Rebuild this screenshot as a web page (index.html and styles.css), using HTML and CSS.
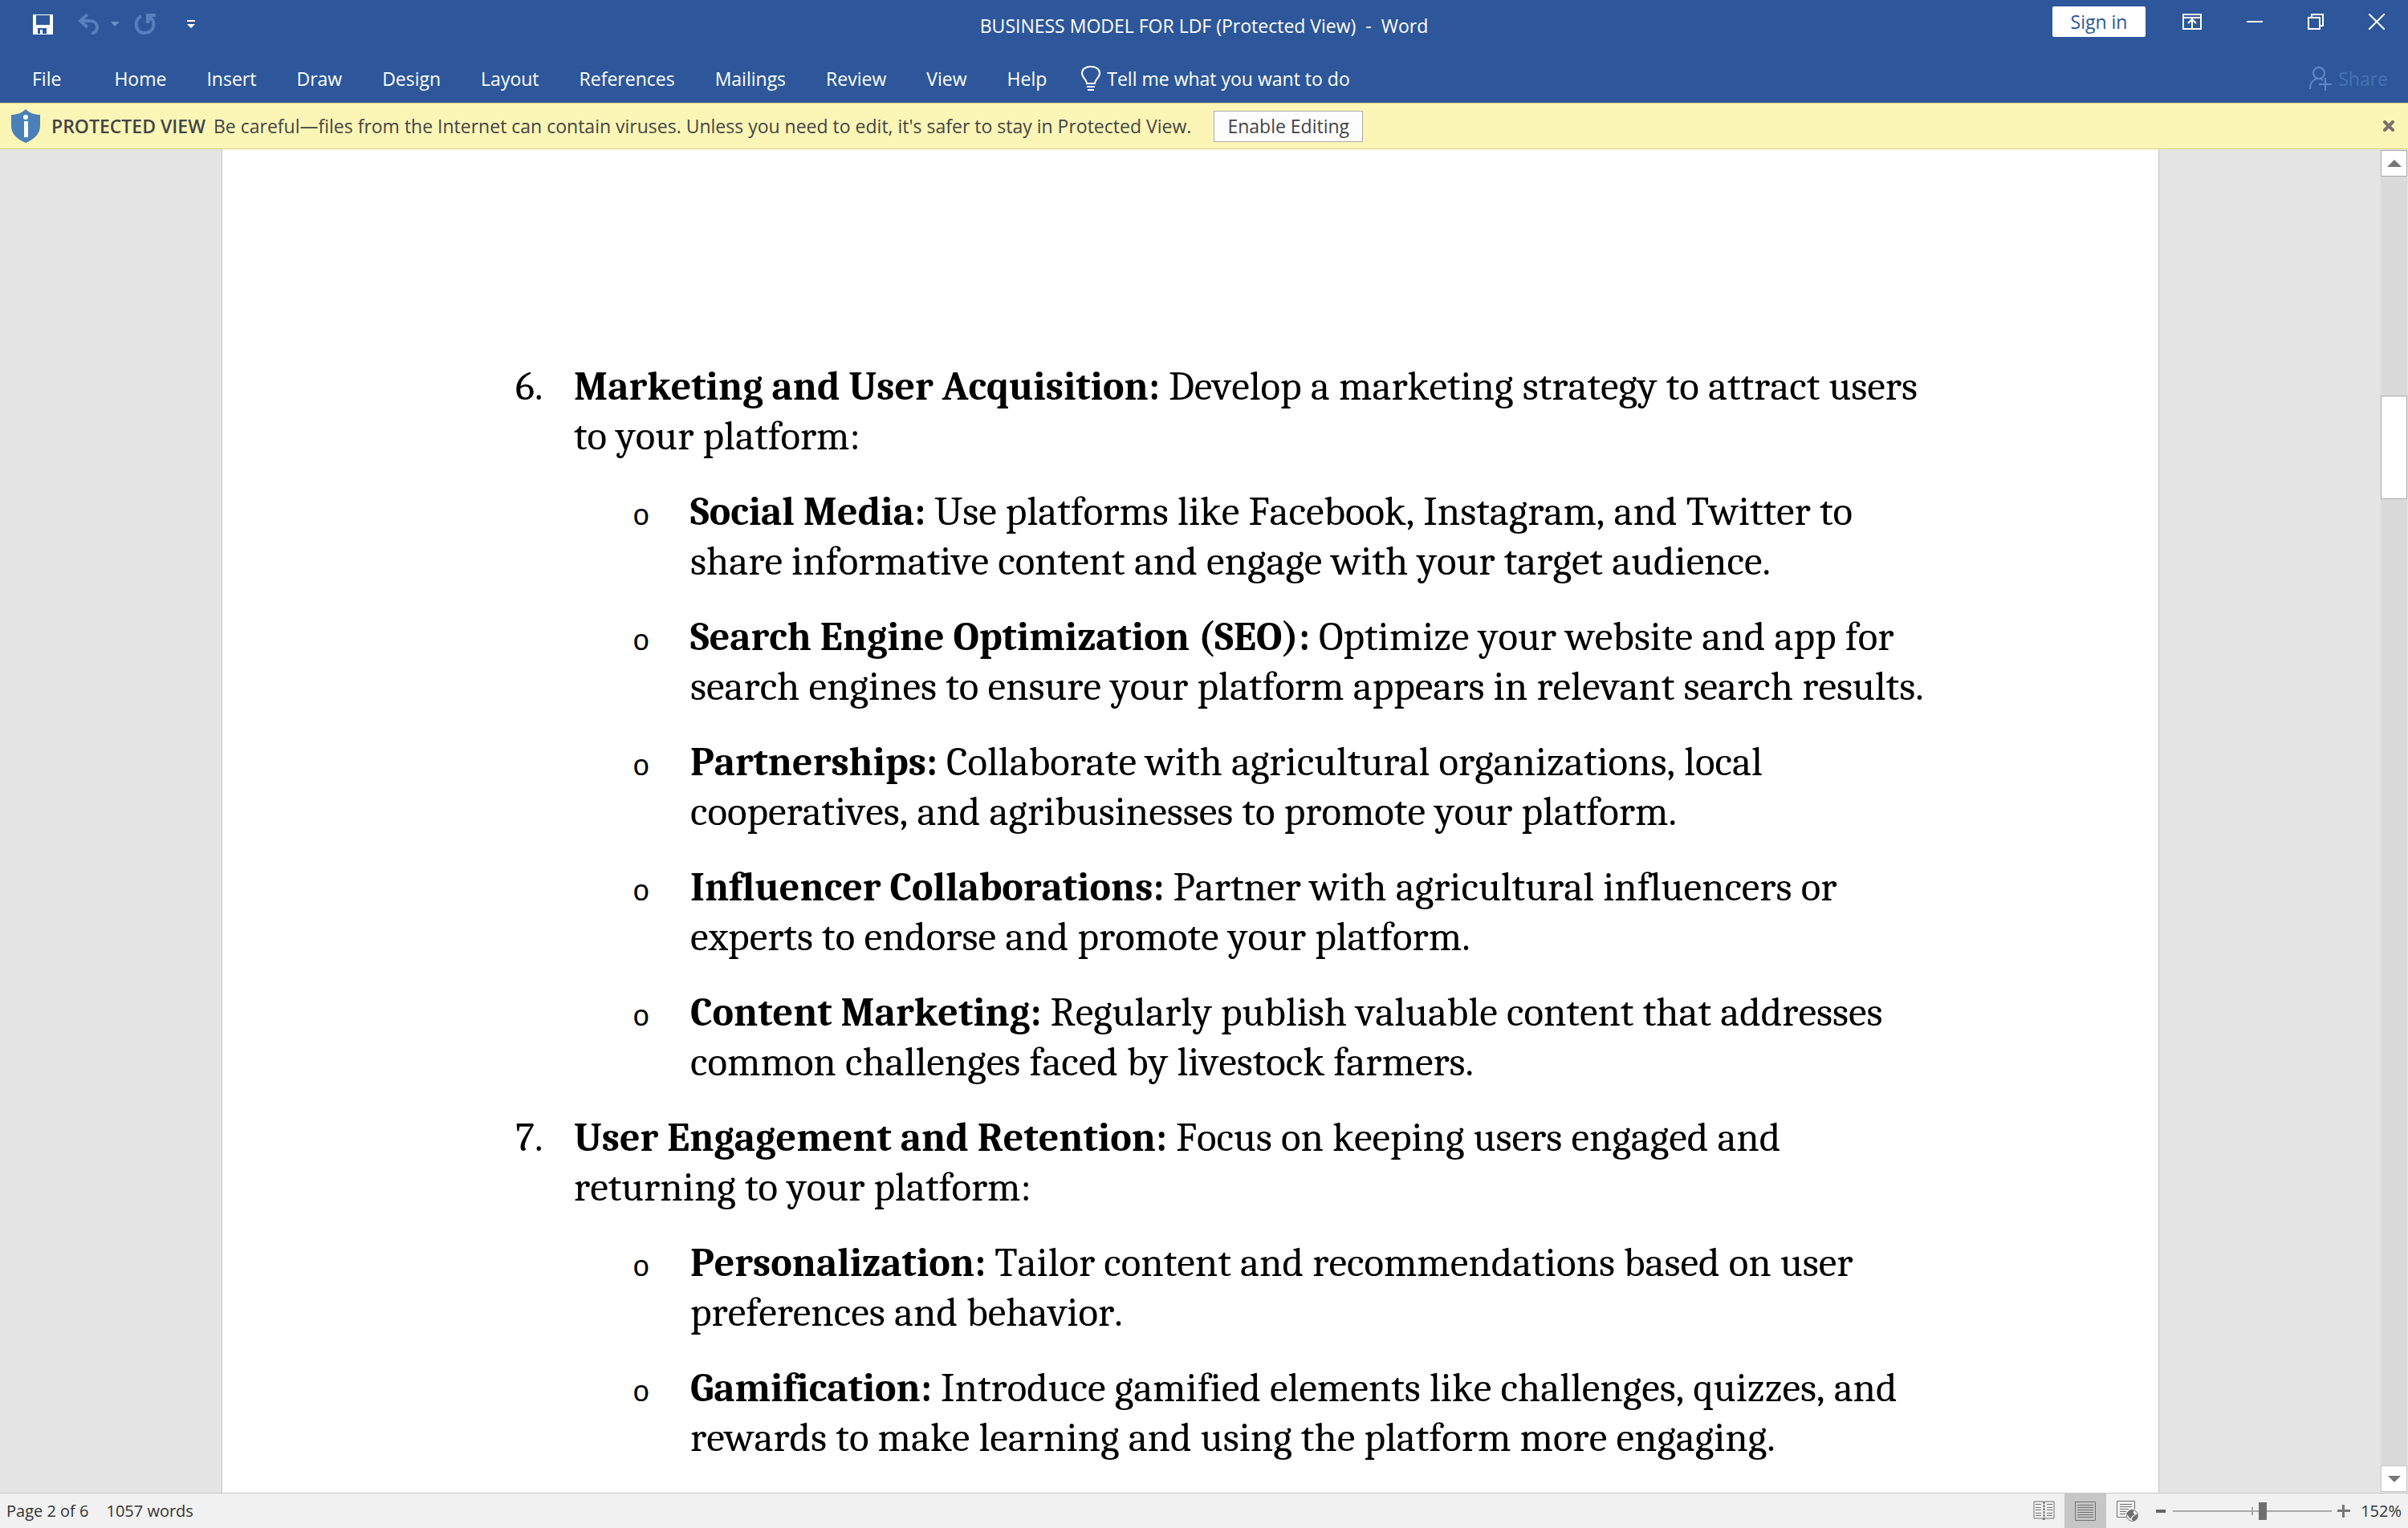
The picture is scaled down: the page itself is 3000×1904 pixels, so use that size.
FILE: index.html
```html
<!DOCTYPE html>
<html lang="en">
<head>
<meta charset="utf-8">
<meta name="viewport" content="width=device-width, initial-scale=1">
<title>BUSINESS MODEL FOR LDF (Protected View) - Word</title>
<link rel="stylesheet" href="styles.css">
</head>
<body>
<header class="app-header">
  <div class="title-bar">
    <div class="quick-access">
      <button class="icon-btn" aria-label="Save"><svg width="25" height="25" viewBox="0 0 25 25"><path fill="#fff" fill-rule="evenodd" d="M0 0h25v25H0zM4 1v12h17V1zM6 17v7h3v-5h3v5h5v-7z"/></svg></button>
      <button class="icon-btn undo" aria-label="Undo"><svg width="26" height="26" viewBox="0 0 26 26" fill="none" stroke="#557fbd" stroke-width="4"><path d="M12 1L3 9l9 8M3 9h12c11 0 12 14 2 16"/></svg></button>
      <button class="icon-btn undo-menu" aria-label="Undo list"><svg width="11" height="6" viewBox="0 0 11 6"><path fill="#6a90c9" d="M0 0h11L5 6z"/></svg></button>
      <button class="icon-btn redo" aria-label="Repeat"><svg width="28" height="28" viewBox="0 0 28 28"><path fill="none" stroke="#557fbd" stroke-width="4" d="M9 4C-1 9 1 25 13 25c13 0 15-15 6-20"/><path fill="#557fbd" d="M15 1h12v4h-5l-3 8h-4z"/></svg></button>
      <button class="icon-btn" aria-label="Customize Quick Access Toolbar"><svg width="10" height="11" viewBox="0 0 10 11" fill="#fff"><path d="M0 0h10v2H0zM0 5h10l-5 5z"/></svg></button>
    </div>
    <h1 class="doc-title">BUSINESS MODEL FOR LDF (Protected View)&nbsp; -&nbsp; Word</h1>
    <div class="window-controls">
      <button class="sign-in">Sign in</button>
      <button class="icon-btn" aria-label="Ribbon Display Options"><svg width="24" height="20" viewBox="0 0 24 20" fill="none" stroke="#fff" stroke-width="2"><path d="M1 1h22v18H1zM1 5h22M12 19V8M7 12l5-5 5 5"/></svg></button>
      <button class="icon-btn" aria-label="Minimize"><svg width="20" height="20" viewBox="0 0 20 20"><path fill="#fff" d="M0 9h20v2H0z"/></svg></button>
      <button class="icon-btn" aria-label="Restore"><svg width="20" height="20" viewBox="0 0 20 20" fill="none" stroke="#fff" stroke-width="2"><path d="M1 5h14v14H1zM5 5V1h14v14h-4"/></svg></button>
      <button class="icon-btn" aria-label="Close"><svg width="20" height="20" viewBox="0 0 20 20" fill="none" stroke="#fff" stroke-width="2"><path d="M0 0l20 20M20 0L0 20"/></svg></button>
    </div>
  </div>
  <nav class="ribbon" aria-label="Ribbon tabs">
    <button class="tab tab-file">File</button>
    <button class="tab">Home</button>
    <button class="tab">Insert</button>
    <button class="tab">Draw</button>
    <button class="tab">Design</button>
    <button class="tab">Layout</button>
    <button class="tab">References</button>
    <button class="tab">Mailings</button>
    <button class="tab">Review</button>
    <button class="tab">View</button>
    <button class="tab">Help</button>
    <button class="tab tell-me"><svg width="24" height="32" viewBox="0 0 24 32" fill="none" stroke="#fff" stroke-width="2"><path d="M7 22c0-5-6-7-6-13C1 4 6 1 12 1s11 3 11 8c0 6-6 8-6 13zM7 26h10M8 30h8"/></svg>Tell me what you want to do</button>
    <button class="tab share" disabled><svg width="28" height="30" viewBox="0 0 28 30" fill="none" stroke="#6189c8" stroke-width="2"><circle cx="12" cy="8" r="7"/><path d="M1 28c0-8 4-13 11-13 2 0 4 1 5 2M20 14v16M12 22h16"/></svg>Share</button>
  </nav>
</header>

<section class="notice" aria-label="Protected View">
  <svg class="shield" width="37" height="42" viewBox="0 0 37 42"><path fill="#4a80b8" d="M18 0c5 5 11 7 18 7v14c0 10-8 17-18 21C8 38 0 31 0 21V7c7 0 13-2 18-7z"/><circle cx="18" cy="10" r="3" fill="#fff"/><path fill="#fff" d="M16 15h5v20h-5z"/></svg>
  <strong class="notice-title">PROTECTED VIEW</strong>
  <span>Be careful—files from the Internet can contain viruses. Unless you need to edit, it's safer to stay in Protected View.</span>
  <button class="enable">Enable Editing</button>
  <button class="icon-btn notice-close" aria-label="Close message"><svg width="14" height="14" viewBox="0 0 14 14"><path stroke="#7a706c" stroke-width="4" stroke-linecap="round" d="M2 2l10 10M12 2L2 12"/></svg></button>
</section>

<div class="workspace">
  <div class="canvas">
    <main class="page">
      <ol class="sections" start="6">
        <li><strong>Marketing and User Acquisition:</strong> Develop a marketing strategy to attract users to your platform:
          <ul class="points">
            <li><strong>Social Media:</strong> Use platforms like Facebook, Instagram, and Twitter to share informative content and engage with your target audience.</li>
            <li><strong>Search Engine Optimization (SEO):</strong> Optimize your website and app for search engines to ensure your platform appears in relevant search results.</li>
            <li><strong>Partnerships:</strong> Collaborate with agricultural organizations, local cooperatives, and agribusinesses to promote your platform.</li>
            <li><strong>Influencer Collaborations:</strong> Partner with agricultural influencers or experts to endorse and promote your platform.</li>
            <li><strong>Content Marketing:</strong> Regularly publish valuable content that addresses common challenges faced by livestock farmers.</li>
          </ul>
        </li>
        <li><strong>User Engagement and Retention:</strong> Focus on keeping users engaged and returning to your platform:
          <ul class="points">
            <li><strong>Personalization:</strong> Tailor content and recommendations based on user preferences and behavior.</li>
            <li><strong>Gamification:</strong> Introduce gamified elements like challenges, quizzes, and rewards to make learning and using the platform more engaging.</li>
          </ul>
        </li>
      </ol>
    </main>
  </div>
  <div class="scrollbar">
    <button class="scroll-btn" aria-label="Scroll up"><svg width="18" height="9" viewBox="0 0 18 9"><path fill="#777" d="M0 9l9-9 9 9z"/></svg></button>
    <div class="scroll-track"><div class="scroll-thumb"></div></div>
    <button class="scroll-btn scroll-down" aria-label="Scroll down"><svg width="16" height="8" viewBox="0 0 16 8"><path fill="#777" d="M0 0h16L8 8z"/></svg></button>
  </div>
</div>

<footer class="status-bar">
  <span>Page 2 of 6</span>
  <span>1057 words</span>
  <div class="view-modes">
    <button class="view-btn" aria-label="Read Mode"><svg width="27" height="25" viewBox="0 0 27 25" fill="none" stroke="#707070"><path d="M12 1H1v21h11l1 2 2-2h11V1H15l-2 2zM3 4.500h7M3 8.500h7M3 11.500h7M3 15.500h7M3 18.500h7M17 4.500h7M17 8.500h7M17 11.500h7M17 15.500h7M17 18.500h7"/><path stroke-width="2" stroke-dasharray="3 1" d="M13.500 1v23"/></svg></button>
    <button class="view-btn active" aria-label="Print Layout"><svg width="26" height="24" viewBox="0 0 26 24" fill="none" stroke="#707070"><path d="M.5.5h25v23H.5zM3 4.500h20M3 7.500h20M3 10.500h20M3 13.500h20M3 16.500h20M3 19.500h20"/></svg></button>
    <button class="view-btn" aria-label="Web Layout"><svg width="27" height="26" viewBox="0 0 27 26" fill="none" stroke="#707070"><path d="M12 20.500H.5V.5h22v10M4 4.500h15M4 7.500h15M4 10.500h11M4 13.500h8M4 16.500h7"/><circle cx="19.500" cy="18.500" r="7" fill="#f1f1f1"/><path fill="#707070" d="M13 16c1-3 5-5 8-4l-1 3 2 2-3 2-2 3zM21 20l4-3c2 4-1 7-4 8l-2-2z"/></svg></button>
  </div>
  <div class="zoom">
    <button class="icon-btn" aria-label="Zoom out"><svg width="12" height="4" viewBox="0 0 12 4"><path fill="#666" d="M0 0h12v4H0z"/></svg></button>
    <input class="zoom-slider" type="range" min="0" max="100" value="57" aria-label="Zoom">
    <button class="icon-btn" aria-label="Zoom in"><svg width="16" height="16" viewBox="0 0 16 16"><path fill="#777" d="M6 0h3v6h7v3H9v7H6V9H0V6h6z"/></svg></button>
    <span class="zoom-value">152%</span>
  </div>
</footer>
</body>
</html>
```
FILE: styles.css
```css
* {
  box-sizing: border-box;
}

body {
  margin: 0;
  height: 100vh;
  display: flex;
  flex-direction: column;
  overflow: hidden;
  background: #e4e4e4;
  font: 23px/32px "Segoe UI", "Open Sans", "Noto Sans", sans-serif;
  color: #444;
}

button {
  margin: 0;
  padding: 0;
  border: 0;
  background: none;
  color: inherit;
  font: inherit;
  white-space: nowrap;
}

svg {
  display: block;
  flex: none;
}

.icon-btn {
  display: flex;
  align-items: center;
}

/* Title bar and ribbon tabs */
.app-header {
  background: #2d579a;
  color: #fff;
}

.title-bar {
  display: grid;
  grid-template-columns: 1fr auto 1fr;
  height: 68px;
}

.quick-access {
  display: flex;
  align-items: center;
  height: 60px;
  padding-left: 41px;
}

.undo {
  margin-left: 31px;
}

.undo-menu {
  margin-left: 15px;
}

.redo {
  margin: 0 38px 0 18px;
}

.doc-title {
  margin: 0;
  padding-top: 16px;
  font-size: 23px;
  line-height: 32px;
  font-weight: 400;
}

.window-controls {
  display: flex;
  justify-content: flex-end;
  align-items: center;
  gap: 56px;
  height: 54px;
  padding-right: 29px;
}

.sign-in {
  width: 116px;
  height: 38px;
  margin-right: -10px;
  border-radius: 2px;
  background: #fff;
  color: #2b579a;
}

.ribbon {
  display: flex;
  align-items: center;
  gap: 50px;
  height: 60px;
  padding: 0 25px 0 40px;
}

.tab-file {
  margin-right: 16px;
}

.tell-me {
  display: flex;
  align-items: center;
  gap: 8px;
  margin-left: -7px;
}

.share {
  display: flex;
  align-items: center;
  gap: 8px;
  margin-left: auto;
  color: #4674b6;
}

/* Protected view message */
.notice {
  display: flex;
  align-items: center;
  height: 58px;
  padding: 0 17px 0 14px;
  border: solid #d8d080;
  border-width: 1px 0;
  background: #fbf6b6;
}

.notice-title {
  margin: 0 10px 0 13px;
  font-weight: 600;
}

.enable {
  width: 186px;
  height: 39px;
  margin-left: 28px;
  border: 1px solid #ababab;
  background: #fdfdfd;
}

.notice-close {
  margin-left: auto;
}

/* Document */
.workspace {
  flex: 1;
  min-height: 0;
  display: flex;
}

.canvas {
  flex: 1;
  display: flex;
  padding: 0 276px;
  overflow: hidden;
}

.page {
  flex: 1;
  padding: 265px 288px 0 365px;
  border: solid #c6c6c6;
  border-width: 0 1px;
  background: #fff;
  color: #000;
  font: 51px/62px Cambria, Caladea, "Liberation Serif", serif;
  font-kerning: none;
  font-variant-ligatures: none;
}

.page strong {
  font-size: 50px;
  line-height: 1;
}

.sections,
.points {
  margin: 0;
  padding: 0;
  list-style: none;
}

.sections {
  counter-reset: section 5;
}

.sections > li {
  counter-increment: section;
  padding-left: 73px;
  margin-bottom: 32px;
  text-indent: -73px;
}

.sections > li::before {
  content: counter(section) ".";
  display: inline-block;
  width: 73px;
  line-height: 1;
  text-indent: 0;
}

.points {
  padding-left: 73px;
}

.points li {
  margin-top: 32px;
  padding-left: 72px;
  text-indent: -72px;
}

.points li::before {
  content: "o";
  display: inline-block;
  width: 72px;
  font-family: "Courier New", "Liberation Mono", monospace;
  font-size: 36px;
  line-height: 1;
  text-indent: 0;
}

/* Vertical scroll bar */
.scrollbar {
  display: flex;
  flex-direction: column;
  width: 34px;
  padding: 1px 1px 1px 0;
}

.scroll-btn {
  display: flex;
  align-items: center;
  justify-content: center;
  height: 33px;
  border: 1px solid #ababab;
  background: #fff;
}

.scroll-down {
  border-color: #c6c6c6;
}

.scroll-track {
  flex: 1;
  padding-top: 273px;
  background: #dadada;
}

.scroll-thumb {
  height: 129px;
  border: 1px solid #ababab;
  background: #fff;
}

/* Status bar */
.status-bar {
  display: flex;
  align-items: center;
  gap: 22px;
  height: 44px;
  padding: 0 8px;
  border-top: 1px solid #c6c6c6;
  background: #f1f1f1;
  color: #333;
  font-size: 20px;
}

.view-modes {
  display: flex;
  align-self: stretch;
  margin-left: auto;
}

.view-btn {
  display: flex;
  align-items: center;
  justify-content: center;
  width: 52px;
}

.view-btn.active {
  background: #c6c6c6;
}

.zoom {
  display: flex;
  align-items: center;
  margin-left: -12px;
}

.zoom-slider {
  appearance: none;
  width: 198px;
  height: 22px;
  margin: 0 7px 0 9px;
  background:
    linear-gradient(#ababab, #ababab) 98px center / 2px 10px no-repeat,
    linear-gradient(#ababab, #ababab) center / 100% 2px no-repeat;
}

.zoom-slider::-webkit-slider-thumb {
  appearance: none;
  width: 10px;
  height: 22px;
  background: #707070;
}

.zoom-value {
  width: 64px;
  text-align: right;
}
```
